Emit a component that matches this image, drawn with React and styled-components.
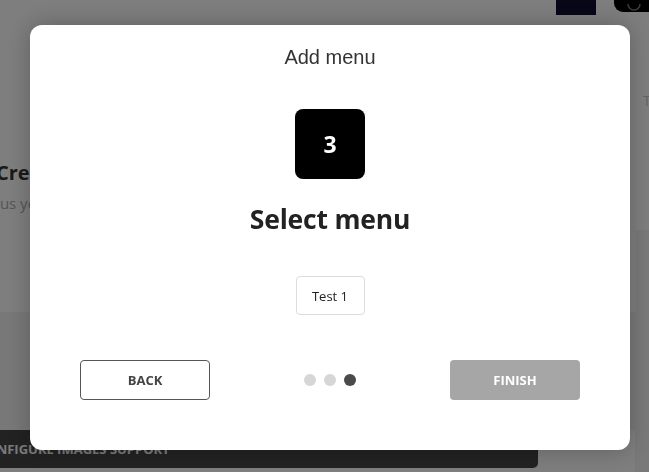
import React from "react";
import styled, { createGlobalStyle } from "styled-components";

const Global = createGlobalStyle`
  html, body {
    margin: 0;
    padding: 0;
    overflow: hidden;
  }
  body {
    font-family: "Open Sans", "Noto Sans", sans-serif;
    background: #fff;
  }
`;

// ---- page behind the dialog ----
const Page = styled.div`
  width: 649px;
  height: 472px;
  display: flex;
  flex-direction: column;
  background: #fdfdfd;
`;

const TopBar = styled.div`
  height: 15px;
  display: flex;
  justify-content: flex-end;
  align-items: flex-start;
  gap: 18px;
`;

const Swatch = styled.div`
  width: 40px;
  height: 15px;
  background: #0e0e30;
`;

const RoundBtn = styled.div`
  width: 40px;
  height: 12px;
  margin-right: -5px;
  background: #000;
  border-radius: 0 0 0 9px;
  display: flex;
  justify-content: center;
  align-items: flex-end;
  overflow: hidden;
`;

const Body = styled.div`
  flex: 1;
  display: flex;
`;

const Main = styled.div`
  flex: 1;
  display: flex;
  flex-direction: column;
  margin-left: -4px;
`;

const Side = styled.div`
  width: 14px;
  display: flex;
  flex-direction: column;
`;

const SideText = styled.div`
  padding: 76px 0 0 8px;
  height: 139px;
  font-size: 14px;
  color: #c8c8c8;
`;

const SidePanel = styled.div`
  flex: 1;
  background: #f3f3f3;
`;

const Heading = styled.h2`
  margin: 145px 0 0;
  font-size: 20px;
  font-weight: 700;
  color: #343434;
  line-height: 26px;
  white-space: nowrap;
`;

const Sub = styled.p`
  margin: 6px 0 0;
  font-size: 15px;
  color: #aaa;
  line-height: 22px;
  white-space: nowrap;
  text-indent: -40px;
`;

const Band = styled.div`
  margin-top: 98px;
  flex: 1;
  background: #f1f1f1;
`;

const DarkBar = styled.div`
  margin-bottom: 4px;
  width: 542px;
  height: 38px;
  background: #444;
  border-radius: 0 0 5px 0;
  display: flex;
  align-items: center;
  font-size: 13px;
  font-weight: 700;
  color: #f4f4f4;
  white-space: nowrap;
  overflow: hidden;
  text-indent: -18px;
`;

// ---- dialog ----
const Overlay = styled.div`
  position: fixed;
  inset: 0;
  background: rgba(0, 0, 0, 0.5);
  display: flex;
  justify-content: center;
  padding-left: 11px;
  padding-top: 25px;
`;

const Modal = styled.div`
  width: 600px;
  height: 425px;
  box-sizing: border-box;
  background: #fff;
  border-radius: 12px;
  box-shadow: 0 0 24px rgba(0, 0, 0, 0.25);
  padding: 20px 50px 50px;
  display: flex;
  flex-direction: column;
  align-items: center;
`;

const Title = styled.div`
  font-family: "Liberation Sans", Arial, sans-serif;
  font-size: 20px;
  line-height: 24px;
  color: #333;
`;

const StepBadge = styled.div`
  margin-top: 40px;
  width: 70px;
  height: 70px;
  border-radius: 8px;
  background: #000;
  color: #fff;
  font-size: 23px;
  font-weight: 700;
  display: flex;
  align-items: center;
  justify-content: center;
`;

const StepTitle = styled.h1`
  margin: 24px 0 0;
  font-size: 26.5px;
  line-height: 32px;
  font-weight: 700;
  color: #222;
  letter-spacing: -0.2px;
`;

const Option = styled.button`
  margin-top: 41px;
  width: 69px;
  height: 39px;
  box-sizing: border-box;
  border: 1px solid #dcdcdc;
  border-radius: 4px;
  background: #fff;
  font-family: "Open Sans", sans-serif;
  font-size: 13px;
  color: #222;
  padding: 0;
`;

const Footer = styled.div`
  margin-top: auto;
  width: 100%;
  display: flex;
  justify-content: space-between;
  align-items: center;
`;

const Btn = styled.button`
  width: 130px;
  height: 40px;
  box-sizing: border-box;
  border-radius: 4px;
  font-family: "Open Sans", sans-serif;
  font-size: 13px;
  font-weight: 700;
  padding: 0;
  border: ${(p) => (p.$primary ? "none" : "1px solid #555")};
  background: ${(p) => (p.$primary ? "#a6a6a6" : "#fff")};
  color: ${(p) => (p.$primary ? "#fff" : "#444")};
`;

const Dots = styled.div`
  display: flex;
  gap: 8px;
`;

const Dot = styled.span`
  width: 12px;
  height: 12px;
  border-radius: 50%;
  background: ${(p) => (p.$active ? "#4a4a4a" : "#d6d6d6")};
`;

export default function App() {
  const steps = [1, 2, 3];
  const current = 3;
  return (
    <>
      <Global />
      <Page>
        <TopBar>
          <Swatch />
          <RoundBtn>
            <svg width="16" height="8" viewBox="0 0 16 8">
              <path d="M2 0a6 6 0 0 0 12 0" fill="none" stroke="#777" strokeWidth="1.5" />
            </svg>
          </RoundBtn>
        </TopBar>
        <Body>
          <Main>
            <Heading>Create your menu</Heading>
            <Sub>Previous years menus</Sub>
            <Band />
            <DarkBar>CONFIGURE IMAGES SUPPORT</DarkBar>
          </Main>
          <Side>
            <SideText>T</SideText>
            <SidePanel />
          </Side>
        </Body>
      </Page>
      <Overlay>
        <Modal>
          <Title>Add menu</Title>
          <StepBadge>{current}</StepBadge>
          <StepTitle>Select menu</StepTitle>
          <Option>Test 1</Option>
          <Footer>
            <Btn>BACK</Btn>
            <Dots>
              {steps.map((s) => (
                <Dot key={s} $active={s === current} />
              ))}
            </Dots>
            <Btn $primary>FINISH</Btn>
          </Footer>
        </Modal>
      </Overlay>
    </>
  );
}
